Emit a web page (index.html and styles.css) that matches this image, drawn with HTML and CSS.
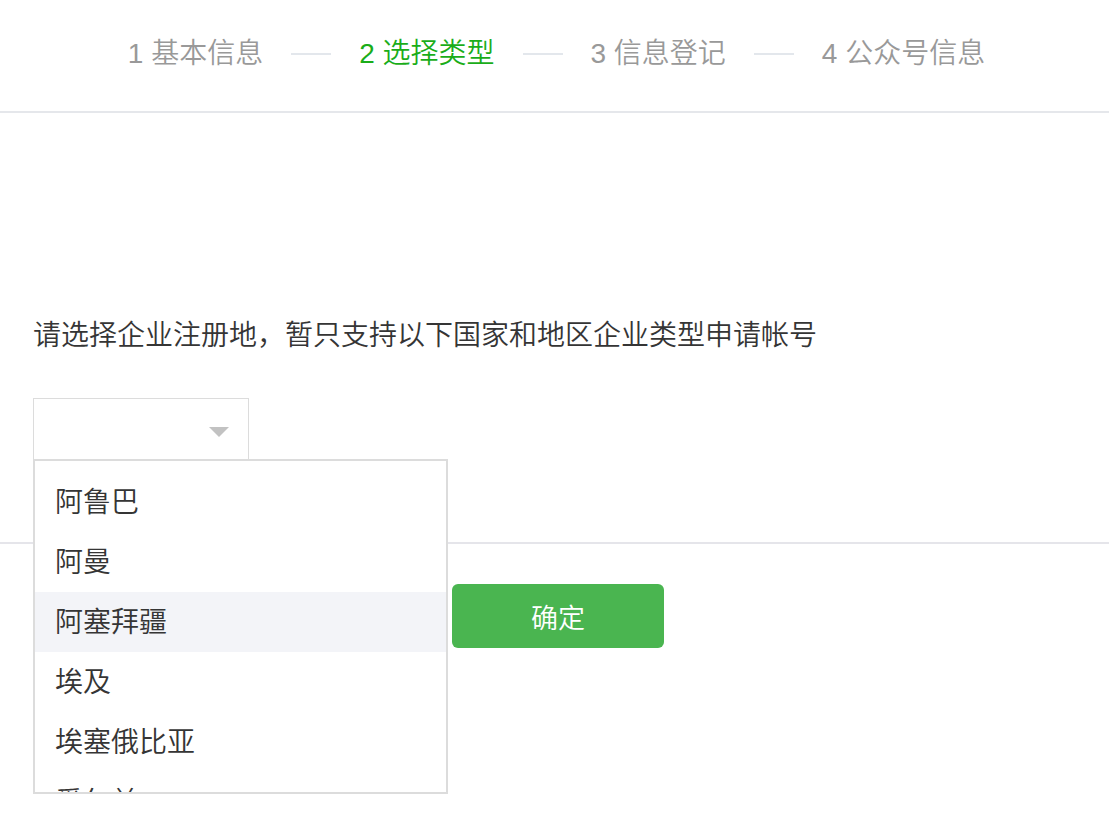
FILE: index.html
```html
<!DOCTYPE html>
<html lang="zh-CN">
<head>
<meta charset="utf-8">
<title>选择类型</title>
<link rel="stylesheet" href="styles.css">
</head>
<body>
<header class="steps">
  <span class="step">1 基本信息</span>
  <span class="sep"></span>
  <span class="step active">2 选择类型</span>
  <span class="sep"></span>
  <span class="step">3 信息登记</span>
  <span class="sep"></span>
  <span class="step">4 公众号信息</span>
</header>
<main class="content">
  <p class="tip">请选择企业注册地，暂只支持以下国家和地区企业类型申请帐号</p>
  <div class="select-wrap">
    <div class="select"><span class="arrow"></span></div>
    <ul class="dropdown">
      <li>阿鲁巴</li>
      <li>阿曼</li>
      <li class="hover">阿塞拜疆</li>
      <li>埃及</li>
      <li>埃塞俄比亚</li>
      <li>爱尔兰</li>
    </ul>
  </div>
</main>
<footer class="actions">
  <button class="btn">确定</button>
</footer>
</body>
</html>
```
FILE: styles.css
```css
html, body {
  margin: 0;
  padding: 0;
  background: #fff;
  font-family: "Liberation Sans", "Noto Sans CJK SC", sans-serif;
  color: #353535;
}
body {
  min-height: 815px;
  overflow: hidden;
}
.steps {
  height: 111px;
  border-bottom: 2px solid #e5e7eb;
  display: flex;
  align-items: center;
  justify-content: center;
  gap: 28px;
  padding-left: 4px;
}
.step {
  font-size: 28px;
  font-weight: 350;
  color: #999;
  line-height: 40px;
  margin-top: -4px;
}
.step.active {
  color: #1aad19;
}
.sep {
  width: 40px;
  height: 2px;
  background: #e3e7ec;
  margin-top: -4px;
}
.content {
  padding: 203px 0 0 33px;
  height: 226px;
  border-bottom: 2px solid #e5e5ea;
}
.tip {
  margin: 0;
  font-size: 28px;
  font-weight: 350;
  line-height: 40px;
}
.select-wrap {
  position: relative;
  margin-top: 42px;
  width: 216px;
}
.select {
  height: 60px;
  border: 1px solid #dcdcdc;
  position: relative;
}
.arrow {
  position: absolute;
  left: 175px;
  top: 28px;
  width: 0;
  height: 0;
  border-left: 10px solid transparent;
  border-right: 10px solid transparent;
  border-top: 10px solid #c2c2c2;
}
.dropdown {
  position: absolute;
  left: 0;
  top: 61px;
  width: 411px;
  height: 320px;
  margin: 0;
  padding: 11px 0 0;
  list-style: none;
  border: 2px solid #dcdcdc;
  background: #fff;
  overflow: hidden;
  z-index: 2;
}
.dropdown li {
  height: 60px;
  line-height: 62px;
  padding-left: 20px;
  font-size: 28px;
  font-weight: 350;
  color: #353535;
}
.dropdown li.hover {
  background: #f3f4f8;
}
.actions {
  padding: 40px 0 0 452px;
}
.btn {
  width: 212px;
  height: 64px;
  border: none;
  border-radius: 6px;
  background: #4ab550;
  color: #fff;
  font-family: "Noto Sans CJK SC", sans-serif;
  font-size: 27px;
  font-weight: 350;
  padding: 0;
}
```
